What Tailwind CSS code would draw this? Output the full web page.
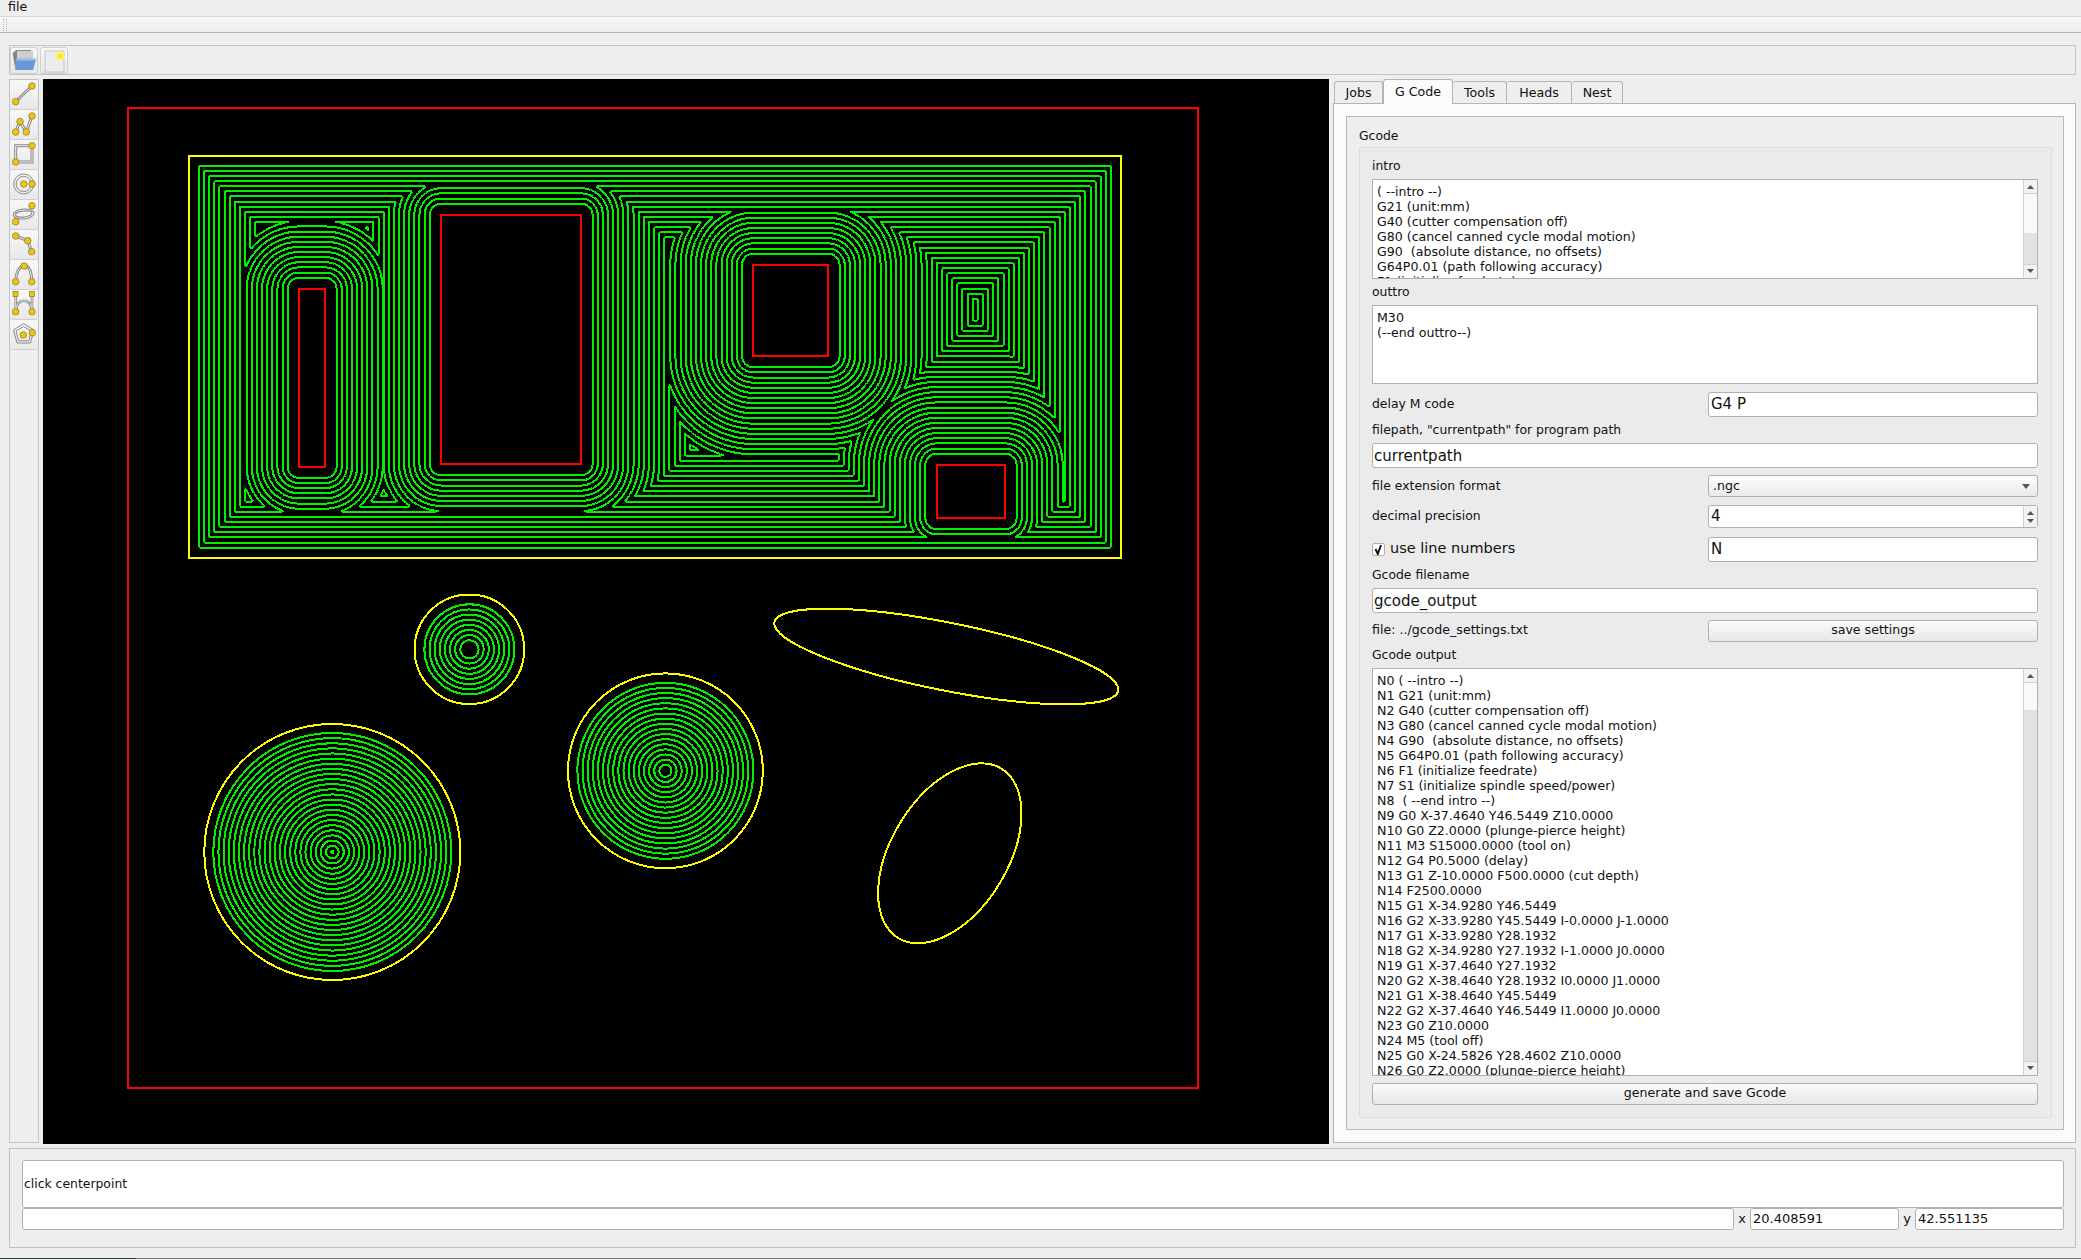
<!DOCTYPE html>
<html lang="en">
  <head>
    <meta charset="UTF-8" />
    <title>CAM</title>
    <script src="https://cdn.jsdelivr.net/npm/@tailwindcss/browser@4"></script>
  </head>
  <body class="w-[2081px] h-[1260px] overflow-hidden bg-[#eeeeee] text-[#111] text-[12.6px] font-['DejaVu_Sans',sans-serif]">
    <!-- menu + toolbar handle -->
    <div class="h-[17px] pl-[8px] leading-[14px] border-b border-[#d8d8d8] bg-[#eeeeee]">file</div>
    <div class="h-[16px] flex items-center pl-[3px] border-b border-[#b4b4b4] bg-linear-to-b from-[#f7f7f7] to-[#eeeeee]">
      <div class="w-[4px] h-[12px] border-x border-dotted border-[#bbb]"></div>
    </div>

    <!-- file toolbar -->
    <div class="ml-[9px] mt-[12px] w-[2067px] h-[30px] flex gap-[2px] pt-[1px] border border-[#c4c4c4] bg-[#eeeeee]">
      <button class="w-[28px] h-[27px] border border-[#cfcfcf] rounded-[3px] bg-linear-to-b from-[#f8f8f8] to-[#e8e8e8]">
        <svg width="26" height="25" viewBox="0 0 26 25">
          <path d="M1.7 5.3 5 2H20V11H5.3L4.3 22Z" fill="#858585" />
          <path d="M6 3H22V11H6Z" fill="#cfcfcf" />
          <path d="M5.3 10.7H25.3L22 22H4.3Z" fill="#6a98d6" />
          <path d="M5.3 10.7H25.3L24.8 12.5H5.1Z" fill="#9fc0ea" />
        </svg>
      </button>
      <button class="w-[28px] h-[27px] border border-[#cfcfcf] rounded-[3px] bg-linear-to-b from-[#f8f8f8] to-[#e8e8e8]">
        <svg width="26" height="25" viewBox="0 0 26 25">
          <rect x="4" y="3" width="19" height="21" fill="#ececec" stroke="#c4c4c4" />
          <circle cx="19.3" cy="8" r="4.6" fill="#fff27a" />
          <circle cx="19.3" cy="8" r="2.6" fill="#ffe81a" />
        </svg>
      </button>
    </div>

    <div class="flex mt-[4px] ml-[9px] h-[1065px]">
      <!-- drawing tools -->
      <div class="w-[30px] h-[1064px] border border-[#c4c4c4] flex flex-col">
        <button class="w-[28px] h-[30px] border-b border-[#cfcfcf] rounded-[3px] bg-linear-to-b from-[#f8f8f8] to-[#e8e8e8]">
          <svg class="-ml-px -mt-px" width="30" height="30" viewBox="0 0 30 30">
            <path d="M6.7 22.7 23 7" stroke="#8a8a8a" stroke-width="3" /><path d="M6.7 22.7 23 7" stroke="#efefef" stroke-width="1" />
            <g fill="#e9c419" stroke="#8c7a22" stroke-width=".7"><circle cx="23" cy="7" r="3.3" /><circle cx="6.7" cy="22.7" r="3.3" /></g>
          </svg>
        </button>
        <button class="w-[28px] h-[30px] border-b border-[#cfcfcf] rounded-[3px] bg-linear-to-b from-[#f8f8f8] to-[#e8e8e8]">
          <svg class="-ml-px -mt-px" width="30" height="30" viewBox="0 0 30 30">
            <path d="M6.7 23 11 12.5 17.3 23 23 7" fill="none" stroke="#8a8a8a" stroke-width="3" /><path d="M6.7 23 11 12.5 17.3 23 23 7" fill="none" stroke="#efefef" stroke-width="1" />
            <g fill="#e9c419" stroke="#8c7a22" stroke-width=".7"><circle cx="23" cy="7" r="3.3" /><circle cx="11" cy="12.5" r="3.3" /><circle cx="6.7" cy="23" r="3.3" /><circle cx="17.3" cy="23" r="3.3" /></g>
          </svg>
        </button>
        <button class="w-[28px] h-[30px] border-b border-[#cfcfcf] rounded-[3px] bg-linear-to-b from-[#f8f8f8] to-[#e8e8e8]">
          <svg class="-ml-px -mt-px" width="30" height="30" viewBox="0 0 30 30">
            <rect x="6.7" y="6.7" width="16.3" height="16.3" fill="none" stroke="#8a8a8a" stroke-width="3" /><rect x="6.7" y="6.7" width="16.3" height="16.3" fill="none" stroke="#efefef" stroke-width="1" />
            <g fill="#e9c419" stroke="#8c7a22" stroke-width=".7"><circle cx="23" cy="6.7" r="3.3" /><circle cx="6.7" cy="23" r="3.3" /></g>
          </svg>
        </button>
        <button class="w-[28px] h-[30px] border-b border-[#cfcfcf] rounded-[3px] bg-linear-to-b from-[#f8f8f8] to-[#e8e8e8]">
          <svg class="-ml-px -mt-px" width="30" height="30" viewBox="0 0 30 30">
            <circle cx="14.7" cy="15" r="10" fill="none" stroke="#8a8a8a" stroke-width="1" /><circle cx="14.7" cy="15" r="7.6" fill="none" stroke="#8a8a8a" stroke-width="1" />
            <g fill="#e9c419" stroke="#8c7a22" stroke-width=".7"><circle cx="14.7" cy="15" r="3.3" /><circle cx="23" cy="15" r="3.3" /></g>
          </svg>
        </button>
        <button class="w-[28px] h-[30px] border-b border-[#cfcfcf] rounded-[3px] bg-linear-to-b from-[#f8f8f8] to-[#e8e8e8]">
          <svg class="-ml-px -mt-px" width="30" height="30" viewBox="0 0 30 30">
            <ellipse cx="14.7" cy="15" rx="10.5" ry="5" transform="rotate(-6 14.7 15)" fill="none" stroke="#8a8a8a" stroke-width="1" /><ellipse cx="14.7" cy="15" rx="8.3" ry="3" transform="rotate(-6 14.7 15)" fill="none" stroke="#8a8a8a" stroke-width="1" />
            <g fill="#e9c419" stroke="#8c7a22" stroke-width=".7"><circle cx="23" cy="6.7" r="3.3" /><circle cx="6.7" cy="22.7" r="3.3" /></g>
          </svg>
        </button>
        <button class="w-[28px] h-[30px] border-b border-[#cfcfcf] rounded-[3px] bg-linear-to-b from-[#f8f8f8] to-[#e8e8e8]">
          <svg class="-ml-px -mt-px" width="30" height="30" viewBox="0 0 30 30">
            <path d="M6.7 7 18.7 11.7 22.7 22.7" fill="none" stroke="#8a8a8a" stroke-width="3" /><path d="M6.7 7 18.7 11.7 22.7 22.7" fill="none" stroke="#efefef" stroke-width="1" />
            <g fill="#e9c419" stroke="#8c7a22" stroke-width=".7"><circle cx="6.7" cy="7" r="3.3" /><circle cx="18.7" cy="11.7" r="3.3" /><circle cx="22.7" cy="22.7" r="3.3" /></g>
          </svg>
        </button>
        <button class="w-[28px] h-[30px] border-b border-[#cfcfcf] rounded-[3px] bg-linear-to-b from-[#f8f8f8] to-[#e8e8e8]">
          <svg class="-ml-px -mt-px" width="30" height="30" viewBox="0 0 30 30">
            <path d="M6.7 22.7C6.7 14 10 7 15.3 7S22.7 14 22.7 22.7" fill="none" stroke="#8a8a8a" stroke-width="3" /><path d="M6.7 22.7C6.7 14 10 7 15.3 7S22.7 14 22.7 22.7" fill="none" stroke="#efefef" stroke-width="1" />
            <g fill="#e9c419" stroke="#8c7a22" stroke-width=".7"><circle cx="15.3" cy="7" r="3.3" /><circle cx="6.7" cy="22.7" r="3.3" /><circle cx="22.7" cy="22.7" r="3.3" /></g>
          </svg>
        </button>
        <button class="w-[28px] h-[30px] border-b border-[#cfcfcf] rounded-[3px] bg-linear-to-b from-[#f8f8f8] to-[#e8e8e8]">
          <svg class="-ml-px -mt-px" width="30" height="30" viewBox="0 0 30 30">
            <path d="M6.7 5V22.7M23 5V22.7M6.7 22.7C6.7 8 23 8 23 22.7" fill="none" stroke="#8a8a8a" stroke-width="2.6" /><path d="M6.7 5V22.7M23 5V22.7M6.7 22.7C6.7 8 23 8 23 22.7" fill="none" stroke="#efefef" stroke-width=".9" />
            <g fill="#e9c419" stroke="#8c7a22" stroke-width=".7"><rect x="4" y="2.5" width="5" height="5" /><rect x="20.5" y="2.5" width="5" height="5" /><circle cx="6.7" cy="22.7" r="3.3" /><circle cx="23" cy="22.7" r="3.3" /></g>
          </svg>
        </button>
        <button class="w-[28px] h-[30px] border-b border-[#cfcfcf] rounded-[3px] bg-linear-to-b from-[#f8f8f8] to-[#e8e8e8]">
          <svg class="-ml-px -mt-px" width="30" height="30" viewBox="0 0 30 30">
            <path d="M14.5 4.5 25 11 21.5 24 8 24 4.5 11Z" fill="none" stroke="#8a8a8a" stroke-width="1" /><path d="M14.5 7.5 22.5 12 19.8 21.8 9.6 21.8 7 12Z" fill="none" stroke="#8a8a8a" stroke-width="1" />
            <g fill="#e9c419" stroke="#8c7a22" stroke-width=".7"><circle cx="14.3" cy="16" r="3.3" /><circle cx="23.3" cy="13.7" r="3.3" /></g>
          </svg>
        </button>
      </div>

      <!-- drawing area, coordinates are page pixels -->
      <svg class="ml-[4px] w-[1286px] h-[1065px] bg-black" viewBox="43 79 1286 1065">
        <g fill="none" stroke-width="2" shape-rendering="crispEdges">
          <path id="contours" stroke="#00f000" stroke-linejoin="round" />
          <g stroke="#ff0000">
            <rect x="128" y="108" width="1070" height="980" />
            <rect x="299" y="289" width="26.3" height="177.7" />
            <rect x="441" y="215" width="140.3" height="249" />
            <rect x="753.3" y="265" width="75" height="91" />
            <rect x="936.7" y="465" width="68.6" height="53" />
          </g>
          <g stroke="#ffff00">
            <rect x="189" y="156" width="932" height="401.7" />
            <circle cx="469.4" cy="649.3" r="54.8" />
            <circle cx="665.4" cy="770.8" r="97.4" />
            <circle cx="332.3" cy="852" r="128" />
            <ellipse cx="946.3" cy="656.5" rx="175.3" ry="33.9" transform="rotate(11.3 946.3 656.5)" />
            <ellipse cx="949.8" cy="853.3" rx="99.2" ry="58.25" transform="rotate(-58.65 949.8 853.3)" />
          </g>
        </g>
      </svg>

      <!-- right side tabs -->
      <div class="w-[747px] pl-[4px]">
        <div class="relative z-10 -mb-px flex items-end h-[25px] pl-px">
          <div class="w-[49px] h-[22px] mb-px leading-[22px] text-center border border-b-0 border-[#b4b4b4] rounded-t-[3px] bg-[#eeeeee]">Jobs</div>
          <div class="w-[70px] h-[25px] leading-[24px] text-center border border-b-0 border-[#b4b4b4] rounded-t-[3px] bg-[#fbfbfb]">G Code</div>
          <div class="w-[54px] h-[22px] mb-px leading-[22px] text-center border border-b-0 border-l-0 border-[#b4b4b4] rounded-t-[3px] bg-[#eeeeee]">Tools</div>
          <div class="w-[65px] h-[22px] mb-px leading-[22px] text-center border border-b-0 border-l-0 border-[#b4b4b4] rounded-t-[3px] bg-[#eeeeee]">Heads</div>
          <div class="w-[51px] h-[22px] mb-px leading-[22px] text-center border border-b-0 border-l-0 border-[#b4b4b4] rounded-t-[3px] bg-[#eeeeee]">Nest</div>
        </div>
        <div class="w-[743px] h-[1040px] border border-[#b4b4b4] bg-[#fbfbfb] pl-[12px] pt-[12px]">
          <div class="w-[718px] h-[1014px] border border-[#b8b8b8] bg-[#eeeeee] pl-[12px]">
            <div class="h-[30px] pt-[11px] leading-[15px] text-[12.4px]">Gcode</div>
            <div class="w-[693px] h-[971px] border border-[#dedede] rounded-[2px] bg-[#ebebeb] pl-[12px] pr-[13px]">
              <div class="h-[31px] pt-[10px] leading-[16px] text-[12.4px]">intro</div>

              <div class="flex h-[100px] border border-[#b0b0b0] bg-white">
                <div class="flex-1 overflow-hidden pl-[4px] pt-[4px] leading-[15px] whitespace-pre">( --intro --)
G21 (unit:mm)
G40 (cutter compensation off)
G80 (cancel canned cycle modal motion)
G90  (absolute distance, no offsets)
G64P0.01 (path following accuracy)
F1 (initialize feedrate)</div>
                <div class="w-[14px] flex flex-col border-l border-[#d0d0d0] bg-[#e2e2e2]">
                  <div class="h-[14px] bg-[#f2f2f2] border-b border-[#d0d0d0] pt-[5px]"><svg class="mx-auto" width="7" height="4"><path d="M3.5 0 7 4H0z" fill="#555" /></svg></div>
                  <div class="h-[39px] bg-[#f9f9f9]"></div>
                  <div class="flex-1"></div>
                  <div class="h-[14px] bg-[#f2f2f2] border-t border-[#d0d0d0] pt-[4px]"><svg class="mx-auto" width="7" height="4"><path d="M3.5 4 7 0H0z" fill="#555" /></svg></div>
                </div>
              </div>

              <div class="h-[26px] pt-[5px] leading-[16px] text-[12.4px]">outtro</div>
              <div class="h-[79px] border border-[#b0b0b0] bg-white pl-[4px] pt-[4px] leading-[15px] whitespace-pre">M30
(--end outtro--)</div>

              <div class="flex items-center mt-[8px] h-[25px]">
                <div class="w-[336px] pb-[1px] text-[12.4px]">delay M code</div>
                <div class="w-[330px] h-[25px] leading-[23px] border border-[#b0b0b0] rounded-[3px] bg-white pl-[2px] text-[15px]">G4 P</div>
              </div>
              <div class="h-[26px] pt-[5px] leading-[16px] text-[12.4px]">filepath, "currentpath" for program path</div>
              <div class="h-[25px] leading-[24px] border border-[#b0b0b0] rounded-[3px] bg-white pl-[1px] text-[15px]">currentpath</div>

              <div class="flex items-center mt-[7px] h-[22px]">
                <div class="w-[336px] text-[12.4px]">file extension format</div>
                <div class="w-[330px] h-[22px] flex items-center justify-between border border-[#b0b0b0] rounded-[3px] bg-linear-to-b from-[#fdfdfd] to-[#e9e9e9] pl-[4px] pr-[7px]">
                  .ngc
                  <svg width="8" height="5"><path d="M0 0H8L4 5z" fill="#555" /></svg>
                </div>
              </div>

              <div class="flex items-center mt-[8px] h-[23px]">
                <div class="w-[336px] text-[12.4px]">decimal precision</div>
                <div class="w-[330px] h-[23px] flex border border-[#b0b0b0] rounded-[3px] bg-white">
                  <div class="flex-1 pl-[2px] text-[15px] leading-[21px]">4</div>
                  <div class="w-[14px] border-l border-[#d0d0d0] bg-[#f2f2f2] flex flex-col items-center justify-center gap-[4px]">
                    <svg width="7" height="4"><path d="M3.5 0 7 4H0z" fill="#555" /></svg>
                    <svg width="7" height="4"><path d="M3.5 4 7 0H0z" fill="#555" /></svg>
                  </div>
                </div>
              </div>

              <div class="flex items-center mt-[9px] h-[25px]">
                <div class="w-[336px] flex items-center pb-[1px] text-[14.5px]">
                  <div class="w-[13px] h-[13px] border border-[#b0b0b0] rounded-[2px] bg-white mr-[5px]">
                    <svg width="11" height="11" viewBox="0 0 11 11"><path d="M2.5 5 4.8 10 8 1" fill="none" stroke="#111" stroke-width="2" /></svg>
                  </div>
                  use line numbers
                </div>
                <div class="w-[330px] h-[25px] leading-[23px] border border-[#b0b0b0] rounded-[3px] bg-white pl-[2px] text-[15px]">N</div>
              </div>
              <div class="h-[26px] pt-[5px] leading-[16px] text-[12.4px]">Gcode filename</div>
              <div class="h-[25px] leading-[24px] border border-[#b0b0b0] rounded-[3px] bg-white pl-[1px] text-[15px]">gcode_output</div>

              <div class="flex items-center mt-[7px] h-[22px]">
                <div class="w-[336px] pb-[2px]">file: ../gcode_settings.txt</div>
                <button class="w-[330px] h-[22px] pb-[1px] border border-[#b0b0b0] rounded-[3px] bg-linear-to-b from-[#fbfbfb] to-[#e7e7e7]">save settings</button>
              </div>
              <div class="h-[26px] pt-[5px] leading-[16px] text-[12.4px]">Gcode output</div>

              <div class="flex h-[408px] border border-[#b0b0b0] bg-white">
                <div class="flex-1 overflow-hidden pl-[4px] pt-[4px] leading-[15px] whitespace-pre">N0 ( --intro --)
N1 G21 (unit:mm)
N2 G40 (cutter compensation off)
N3 G80 (cancel canned cycle modal motion)
N4 G90  (absolute distance, no offsets)
N5 G64P0.01 (path following accuracy)
N6 F1 (initialize feedrate)
N7 S1 (initialize spindle speed/power)
N8  ( --end intro --)
N9 G0 X-37.4640 Y46.5449 Z10.0000
N10 G0 Z2.0000 (plunge-pierce height)
N11 M3 S15000.0000 (tool on)
N12 G4 P0.5000 (delay)
N13 G1 Z-10.0000 F500.0000 (cut depth)
N14 F2500.0000
N15 G1 X-34.9280 Y46.5449
N16 G2 X-33.9280 Y45.5449 I-0.0000 J-1.0000
N17 G1 X-33.9280 Y28.1932
N18 G2 X-34.9280 Y27.1932 I-1.0000 J0.0000
N19 G1 X-37.4640 Y27.1932
N20 G2 X-38.4640 Y28.1932 I0.0000 J1.0000
N21 G1 X-38.4640 Y45.5449
N22 G2 X-37.4640 Y46.5449 I1.0000 J0.0000
N23 G0 Z10.0000
N24 M5 (tool off)
N25 G0 X-24.5826 Y28.4602 Z10.0000
N26 G0 Z2.0000 (plunge-pierce height)</div>
                <div class="w-[14px] flex flex-col border-l border-[#d0d0d0] bg-[#e2e2e2]">
                  <div class="h-[14px] bg-[#f2f2f2] border-b border-[#d0d0d0] pt-[5px]"><svg class="mx-auto" width="7" height="4"><path d="M3.5 0 7 4H0z" fill="#555" /></svg></div>
                  <div class="h-[27px] bg-[#f9f9f9]"></div>
                  <div class="flex-1"></div>
                  <div class="h-[14px] bg-[#f2f2f2] border-t border-[#d0d0d0] pt-[4px]"><svg class="mx-auto" width="7" height="4"><path d="M3.5 4 7 0H0z" fill="#555" /></svg></div>
                </div>
              </div>
              <button class="w-full h-[22px] mt-[7px] pb-[1px] border border-[#b0b0b0] rounded-[3px] bg-linear-to-b from-[#fbfbfb] to-[#e7e7e7]">generate and save Gcode</button>
            </div>
          </div>
        </div>
      </div>
    </div>

    <!-- command line -->
    <div class="ml-[9px] mt-[4px] w-[2067px] h-[100px] border border-[#c0c0c0] pl-[12px] pt-[11px]">
      <div class="w-[2042px] h-[48px] leading-[46px] border border-[#b0b0b0] rounded-[3px] bg-white pl-[1px] text-[12.4px]">click centerpoint</div>
      <div class="flex items-center w-[2042px] h-[22px] text-[13px]">
        <div class="w-[1712px] h-[22px] border border-[#b0b0b0] rounded-[3px] bg-white"></div>
        <div class="w-[16px] text-center">x</div>
        <div class="w-[149px] h-[22px] leading-[20px] border border-[#b0b0b0] rounded-[3px] bg-white pl-[2px]">20.408591</div>
        <div class="w-[16px] text-center">y</div>
        <div class="w-[149px] h-[22px] leading-[20px] border border-[#b0b0b0] rounded-[3px] bg-white pl-[2px]">42.551135</div>
      </div>
    </div>
    <div class="mt-[10px] h-px bg-[#777] flex"><div class="w-[136px] bg-[#2c3a36]"></div></div>

    <script>
      // pocket toolpath: iso lines of the distance to the outer rect and the holes
      const outer = [189, 155.7, 1121, 557.7];
      const holes = [
        [299, 289, 325.3, 466.7],
        [441, 215, 581.3, 464],
        [753.3, 265, 828.3, 356],
        [936.7, 465, 1005.3, 518],
      ];
      const step = 5.12;
      const firstOuter = 10;
      const firstHole = 11.3;

      function field(x, y) {
        let d = Math.min(x - outer[0], outer[2] - x, y - outer[1], outer[3] - y) - firstOuter;
        for (const h of holes) {
          const dx = Math.max(h[0] - x, 0, x - h[2]);
          const dy = Math.max(h[1] - y, 0, y - h[3]);
          d = Math.min(d, Math.hypot(dx, dy) - firstHole);
        }
        return d;
      }

      const parts = [];
      const x0 = 189, y0 = 155, w = 932, h = 403;
      let prev = null;
      for (let j = 0; j <= h; j++) {
        const row = new Float64Array(w + 1);
        for (let i = 0; i <= w; i++) row[i] = field(x0 + i + 0.03, y0 + j + 0.07);
        if (prev) {
          for (let i = 0; i < w; i++) {
            const a = prev[i], b = prev[i + 1], c = row[i + 1], d = row[i];
            const lo = Math.min(a, b, c, d), hi = Math.max(a, b, c, d);
            for (let k = Math.max(0, Math.ceil(lo / step)); k * step <= hi; k++) {
              const v = k * step;
              const x = x0 + i, y = y0 + j - 1;
              const pts = [];
              if ((a < v) !== (b < v)) pts.push([x + (v - a) / (b - a), y]);
              if ((b < v) !== (c < v)) pts.push([x + 1, y + (v - b) / (c - b)]);
              if ((d < v) !== (c < v)) pts.push([x + (v - d) / (c - d), y + 1]);
              if ((a < v) !== (d < v)) pts.push([x, y + (v - a) / (d - a)]);
              for (let p = 0; p + 1 < pts.length; p += 2) {
                parts.push("M" + pts[p][0].toFixed(1) + " " + pts[p][1].toFixed(1) + "L" + pts[p + 1][0].toFixed(1) + " " + pts[p + 1][1].toFixed(1));
              }
            }
          }
        }
        prev = row;
      }

      // concentric rings in the round pockets
      const circles = [
        [469.4, 649.3, 45, 5],
        [665.4, 770.8, 88, 2],
        [332.3, 852, 119, 1],
      ];
      for (const [cx, cy, rOut, rMin] of circles) {
        for (let r = rOut; r >= rMin; r -= step) {
          parts.push(`M${cx - r} ${cy}A${r} ${r} 0 1 0 ${cx + r} ${cy}A${r} ${r} 0 1 0 ${cx - r} ${cy}`);
        }
      }
      document.getElementById("contours").setAttribute("d", parts.join(""));
    </script>
  </body>
</html>
